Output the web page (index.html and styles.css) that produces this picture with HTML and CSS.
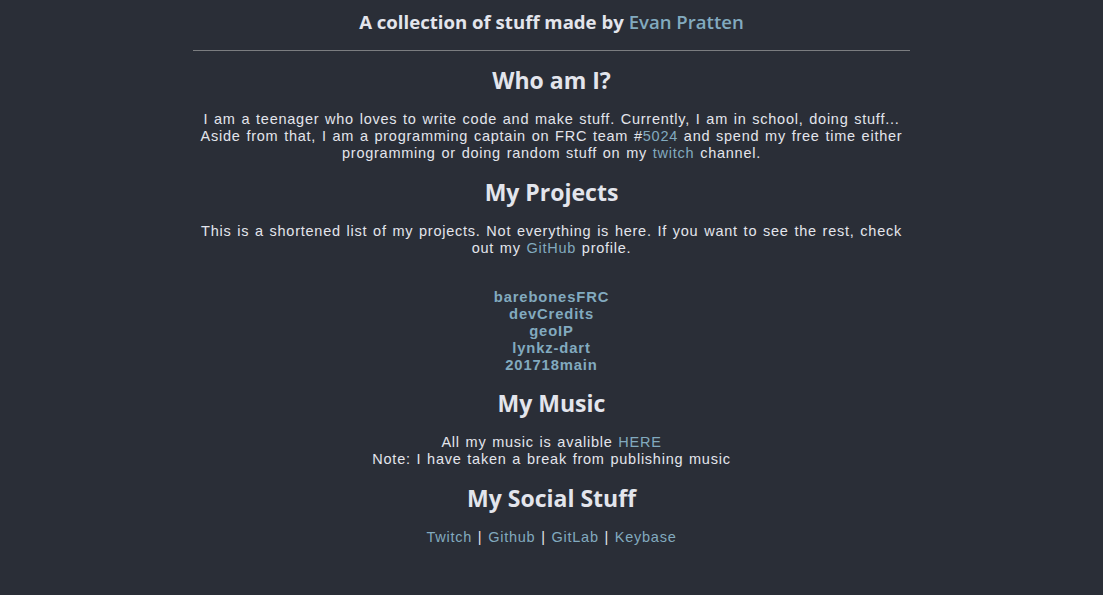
FILE: index.html
```html
<!DOCTYPE html>
<html lang="en">
<head>
<meta charset="utf-8">
<title>Evan Pratten</title>
<link rel="stylesheet" href="styles.css">
</head>
<body>
<main class="page">
  <p class="tagline">A collection of stuff made by <a href="#">Evan Pratten</a></p>
  <hr class="rule">
  <h2 class="title">Who am I?</h2>
  <p class="text"><span>I am a teenager who loves to write code and make stuff. Currently, I am in school, doing stuff...</span><br><span>Aside from that, I am a programming captain on FRC team #</span><a href="#">5024</a><span> and spend my free time either</span><br><span>programming or doing random stuff on my </span><a href="#">twitch</a><span> channel.</span></p>
  <h2 class="title">My Projects</h2>
  <p class="text"><span>This is a shortened list of my projects. Not everything is here. If you want to see the rest, check</span><br><span>out my </span><a href="#">GitHub</a><span> profile.</span></p>
  <ul class="projects">
    <li><a href="#">barebonesFRC</a></li>
    <li><a href="#">devCredits</a></li>
    <li><a href="#">geoIP</a></li>
    <li><a href="#">lynkz-dart</a></li>
    <li><a href="#">201718main</a></li>
  </ul>
  <h2 class="title">My Music</h2>
  <p class="text"><span>All my music is avalible </span><a href="#">HERE</a><br><span>Note: I have taken a break from publishing music</span></p>
  <h2 class="title">My Social Stuff</h2>
  <p class="text social"><a href="#">Twitch</a> | <a href="#">Github</a> | <a href="#">GitLab</a> | <a href="#">Keybase</a></p>
</main>
</body>
</html>
```
FILE: styles.css
```css
html, body {
  margin: 0;
  padding: 0;
  background: #2a2e37;
}
body {
  font-family: "Liberation Sans", Arial, sans-serif;
  color: #e3e5ec;
  font-size: 14.5px;
}
a {
  color: #82aabf;
  text-decoration: none;
}
.page {
  width: 65%;
  margin: 0 auto;
  text-align: center;
  padding-top: 10px;
}
.tagline {
  margin: 0;
  font-family: "Open Sans", sans-serif;
  font-size: 18.6px;
  font-weight: 700;
  line-height: 24px;
}
.tagline a {
  font-weight: 600;
}
.rule {
  margin: 16px 0 0;
  border: 0;
  border-top: 1px solid #7b7d80;
  height: 0;
}
.title {
  margin: 14px 0 16px;
  font-family: "Open Sans", sans-serif;
  font-size: 23px;
  font-weight: 700;
  line-height: 30px;
}
.text + .title { margin-top: 15px; }
.text {
  margin: 0;
  line-height: 17px;
  letter-spacing: 0.75px;
  word-spacing: 1px;
}
.projects {
  list-style: none;
  margin: 32px 0 0;
  padding: 0;
  line-height: 17px;
  font-size: 14.8px;
  font-weight: 700;
  letter-spacing: 0.85px;
}
.projects + .title { margin-top: 14px; }
```
